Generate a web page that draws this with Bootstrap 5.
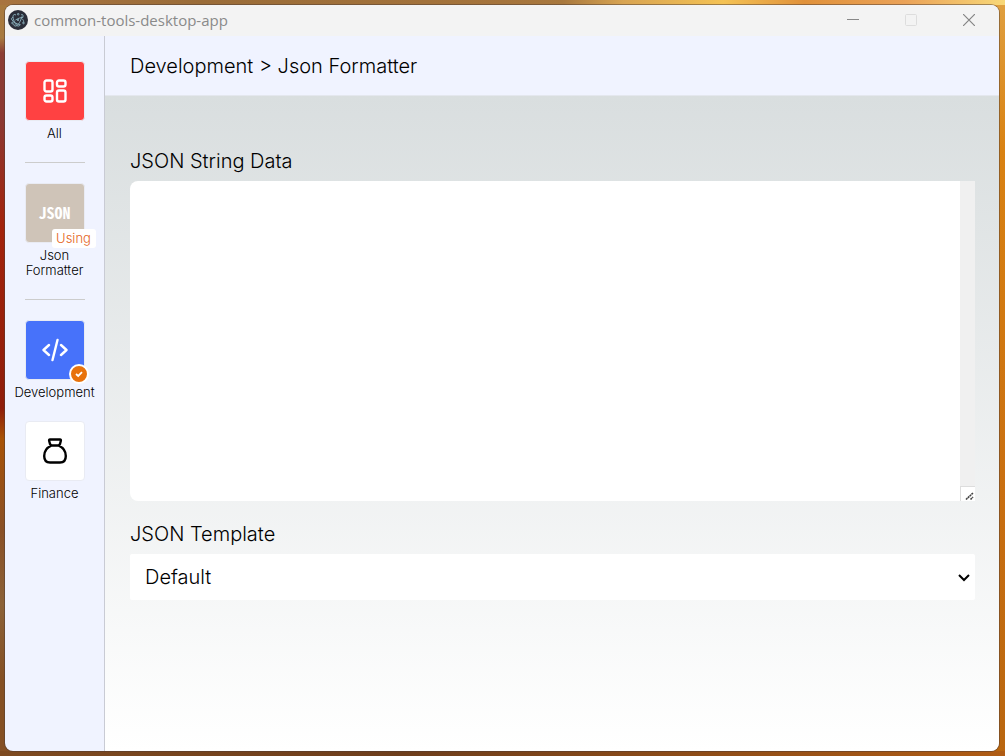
<!DOCTYPE html>
<html lang="en">
<head>
<meta charset="utf-8">
<meta name="viewport" content="width=device-width, initial-scale=1">
<title>common-tools-desktop-app</title>
<link href="https://cdn.jsdelivr.net/npm/bootstrap@5.3.0/dist/css/bootstrap.min.css" rel="stylesheet">
<style>
  body {
    font-family: Inter, "Liberation Sans", sans-serif;
    color: #000;
    padding: 5px 6px 5px 5px;
    background:
      linear-gradient(90deg, #a87440, #9a6c38 20%, #a5743c 50%, #a8783e 56%, #d8a452 62%, #f4c254 72%, #e0913a 80%, #eaa258 90%, #f8d878) top / 100% 5px no-repeat,
      linear-gradient(90deg, #7e4a20, #6e3e1c 40%, #b05c14) bottom / 100% 5px no-repeat,
      linear-gradient(#a8793e, #a87a40 5%, #8c3d36 7%, #8c3832 16%, #a3230c 30%, #8f1d0a 54%, #a85206 58%, #8a5026 70%, #8c6238 80%, #855024 90%) left / 50% 100% no-repeat,
      linear-gradient(#e0a040, #d98212 20%, #c96f10 65%, #b9660f) right / 50% 100% no-repeat;
  }
  .app-window { border-radius: 8px; background: #f0f3ff; box-shadow: 0 0 0 1px rgba(80, 60, 50, .5); }
  .title-bar { height: 31px; background: #f3f3f3; color: #8a8a8a; font: 15px/20px "Open Sans", "Noto Sans", sans-serif; padding: 0 1px 2px 3px; }
  .app-name { margin-left: 6px; }
  .win-btn { width: 58px; height: 29px; }
  .win-btn:disabled { opacity: 1; border: 0; }
  .side-bar { width: 100px; border-right: 1px solid #c9cbd4; padding-top: 25px; font-size: 13px; line-height: 15px; font-weight: 300; }
  .tool { color: #000; width: 100%; }
  .tile { width: 60px; height: 60px; border: 1px solid #e9ebf3; border-radius: 4px; margin-bottom: 5px; }
  .tile-all { background: #ff4142; }
  .tile-json { background: #cfc4b8; color: #fff; font: 900 16px/20px "Noto Sans Mono CJK JP", "Noto Sans Mono CJK SC", "Liberation Sans Narrow", monospace; padding-bottom: 2px; }
  .tile-dev { background: #4772fa; }
  .rule { width: 60px; height: 1px; background: #ccc; margin: 21px 0 20px; }
  .using { right: -12px; bottom: -6px; width: 44px; height: 19px; line-height: 18px; border-radius: 3px; background: #fff; color: #e5641a; font-family: Inter, sans-serif; font-size: 13px; font-weight: 300; }
  .check { right: -5px; bottom: -5px; }
  .finance { margin-top: 21px; }
  .crumbs { height: 60px; padding: 0 25px; border-bottom: 1px solid #e4e7ee; }
  .crumbs, .field-label, .template { font-size: 20px; line-height: 24px; font-weight: 300; }
  .page { background: linear-gradient(#d9dedf, #fff); padding: 53px 24px 24px 25px; border-bottom-right-radius: 8px; }
  .data-box { height: 320px; border-radius: 8px 0 0 8px; background: #fff; margin-bottom: 21px; }
  .data-box textarea { resize: none; background: transparent; }
  .track { width: 15px; background: #f0f0f0; }
  .grip { width: 15px; height: 15px; background: #fff; border: solid #ddd; border-width: 1px 0 0 1px; }
  .template { height: 46px; border: 0; border-radius: 2px; padding: 0 15px; color: #000; appearance: none; background: #fff; }
  .chevron { right: 5px; top: 17px; pointer-events: none; }
</style>
</head>
<body class="min-vh-100 d-flex">
<div class="app-window flex-grow-1 d-flex flex-column overflow-hidden">
  <header class="title-bar d-flex align-items-center">
    <svg width="20" height="20" viewBox="0 0 20 20" fill="none" stroke="#8fb6c2" stroke-width=".9">
      <circle cx="10" cy="10" r="10" fill="#2b2e3a" stroke="none"/>
      <path d="M5 7.500C3.500 7.500 3 8.500 4 10C5.300 12 9 14.300 12 14.500M15.200 7.500C13.500 7.200 10 8.300 7.500 10M13 5C14.300 4 15.300 4.500 15 7M15 12.500C16.500 11.500 15 9.500 13.500 8.200M8 5C6.500 4 5 4.500 5 6.500C5 9 6.500 13 8.500 15.200C10 16.500 11.500 16.300 12.500 14.500M13.800 6.500C12.800 11 10.500 15 8 16C6.500 16.300 5.800 15.500 5.700 14"/>
      <circle cx="10" cy="10" r=".9" fill="#9dc4cf" stroke="none"/>
      <circle cx="4.500" cy="13" r=".8"/><circle cx="15.500" cy="13" r=".8"/><circle cx="10.200" cy="4.200" r=".8"/>
    </svg>
    <span class="app-name flex-grow-1">common-tools-desktop-app</span>
    <button class="win-btn btn p-0 border-0 d-flex align-items-center justify-content-center" aria-label="Minimize"><svg width="12" height="12"><path d="M0 5.500H12" stroke="#888"/></svg></button>
    <button class="win-btn btn p-0 border-0 d-flex align-items-center justify-content-center" aria-label="Maximize" disabled><svg width="12" height="12" fill="none"><rect x=".5" y=".5" width="11" height="11" rx="1" stroke="#ddd"/></svg></button>
    <button class="win-btn btn p-0 border-0 d-flex align-items-center justify-content-center" aria-label="Close"><svg width="12" height="12"><path d="M0 0L12 12M12 0L0 12" stroke="#858585" stroke-width="1.200"/></svg></button>
  </header>
  <div class="d-flex flex-grow-1">
    <nav class="side-bar flex-shrink-0 d-flex flex-column align-items-center text-center">
      <a class="tool d-flex flex-column align-items-center text-decoration-none" href="#">
        <span class="tile tile-all d-flex align-items-center justify-content-center">
          <svg width="26" height="26" viewBox="0 0 26 26" fill="none" stroke="#fff" stroke-width="2.400"><rect x="2.500" y="2.500" width="8" height="11" rx="2"/><rect x="15" y="2.500" width="8.500" height="6" rx="2"/><rect x="2.500" y="17.500" width="8" height="6" rx="2"/><rect x="15" y="12.500" width="8.500" height="11" rx="2"/></svg>
        </span>All
      </a>
      <div class="rule"></div>
      <a class="tool d-flex flex-column align-items-center text-decoration-none" href="#">
        <span class="tile tile-json position-relative d-flex align-items-center justify-content-center">JSON<span class="using position-absolute">Using</span></span>Json<br>Formatter
      </a>
      <div class="rule"></div>
      <a class="tool d-flex flex-column align-items-center text-decoration-none" href="#">
        <span class="tile tile-dev position-relative d-flex align-items-center justify-content-center">
          <svg width="26" height="24" viewBox="0 0 26 24" fill="none" stroke="#fff" stroke-width="2.400" stroke-linecap="round" stroke-linejoin="round"><path d="M7 7L1.500 12L7 17M19 7L24.500 12L19 17M15.500 2L10.500 22"/></svg>
          <svg class="check position-absolute" width="20" height="20"><circle cx="10" cy="10" r="9" fill="#e8720c" stroke="#fff" stroke-width="2"/><path d="M7 10L9.200 12L13 8.200" fill="none" stroke="#fff" stroke-width="1.800"/></svg>
        </span>Development
      </a>
      <a class="tool finance d-flex flex-column align-items-center text-decoration-none" href="#">
        <span class="tile bg-white d-flex align-items-center justify-content-center">
          <svg width="26" height="28" viewBox="0 0 26 28" fill="none" stroke="#000" stroke-width="2.400" stroke-linejoin="round"><path d="M8 2.500H18Q19.200 2.500 18.800 4L18 7Q17.500 8.500 16 8.500H10Q8.500 8.500 8 7L7.200 4Q6.800 2.500 8 2.500ZM9.500 8.500C5 10.500 2.200 14.500 2.200 19C2.200 23.500 4.500 25.500 8 25.500H18C21.500 25.500 23.800 23.500 23.800 19C23.800 14.500 21 10.500 16.500 8.500"/></svg>
        </span>Finance
      </a>
    </nav>
    <div class="flex-grow-1 d-flex flex-column">
      <div class="crumbs d-flex align-items-center">Development &gt; Json Formatter</div>
      <main class="page flex-grow-1">
        <label class="field-label d-block mb-2" for="data">JSON String Data</label>
        <div class="data-box d-flex">
          <textarea id="data" class="form-control border-0 shadow-none flex-grow-1"></textarea>
          <div class="track flex-shrink-0 d-flex align-items-end"><svg class="grip" viewBox="0 0 14 14" stroke="#444" stroke-width="1.600" stroke-dasharray="2 .5"><path d="M5 12.500L12 6M9.500 12.500L12 10"/></svg></div>
        </div>
        <label class="field-label d-block mb-2" for="template">JSON Template</label>
        <div class="position-relative">
          <select id="template" class="template w-100"><option>Default</option></select>
          <svg class="chevron position-absolute" width="12" height="12" fill="none" stroke="#000" stroke-width="2"><path d="M1 4L6 9L11 4"/></svg>
        </div>
      </main>
    </div>
  </div>
</div>
<script src="https://cdn.jsdelivr.net/npm/bootstrap@5.3.0/dist/js/bootstrap.bundle.min.js"></script>
</body>
</html>
